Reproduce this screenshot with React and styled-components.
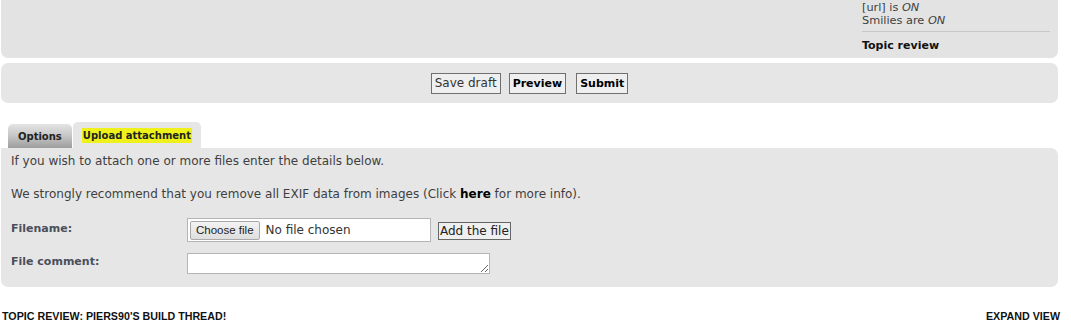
import React from "react";
import styled, { createGlobalStyle } from "styled-components";

const GlobalStyle = createGlobalStyle`
  html, body {
    margin: 0;
    padding: 0;
    background: #fff;
  }
  body {
    font-family: "DejaVu Sans", Verdana, sans-serif;
    font-size: 12px;
    color: #3f3f3f;
  }
`;

const Page = styled.div`
  width: 1057px;
  padding-left: 1px;
`;

const Panel = styled.div`
  background: ${({ $bg }) => $bg || "#e3e3e3"};
  border-radius: ${({ $radius }) => $radius || "7px"};
`;

const TopPanel = styled(Panel)`
  height: 58px;
  display: flex;
  justify-content: flex-end;
  padding-right: 8px;
  box-sizing: border-box;
`;

const SideInfo = styled.div`
  width: 188px;
  font-size: 11.3px;
  line-height: 13px;
  padding-top: 1px;

  em {
    font-style: italic;
  }
`;

const Rule = styled.hr`
  border: 0;
  border-top: 1px solid #c8c8c8;
  margin: 4px 0 7px;
`;

const SideTitle = styled.div`
  font-weight: bold;
  color: #111;
  font-size: 11px;
`;

const SubmitPanel = styled(Panel)`
  margin-top: 5px;
  height: 40px;
  display: flex;
  justify-content: center;
  align-items: center;
  gap: 8px;
  box-sizing: border-box;
`;

const Btn = styled.button`
  font-family: "DejaVu Sans", Verdana, sans-serif;
  font-size: ${({ $bold }) => ($bold ? "11px" : "12px")};
  font-weight: ${({ $bold }) => ($bold ? "bold" : "normal")};
  color: ${({ $bold }) => ($bold ? "#000" : "#333")};
  background: #efefef;
  border: 1px solid #707070;
  height: 21px;
  padding: 0 3px;
  line-height: 19px;
  margin: 0 ${({ $space }) => $space || 0}px 0 0;
`;

const Tabs = styled.div`
  display: flex;
  align-items: flex-end;
  margin: 19px 0 0 7px;
  height: 26px;
`;

const Tab = styled.div`
  height: ${({ $active }) => ($active ? "26px" : "24px")};
  box-sizing: border-box;
  padding: 0 ${({ $active }) => ($active ? "9px" : "10px")};
  margin-right: 1px;
  border-radius: 5px 5px 0 0;
  font-size: 10px;
  font-weight: bold;
  color: #222;
  display: flex;
  align-items: center;
  background: ${({ $active }) =>
    $active
      ? "#e6e6e6"
      : "linear-gradient(to bottom, #e4e4e4 0%, #c9c9c9 45%, #9d9d9d 100%)"};
`;

const Highlight = styled.span`
  background: #eef21a;
  padding: 2px 1px;
`;

const AttachPanel = styled(Panel)`
  background: #e6e6e6;
  border-radius: 0 7px 7px 7px;
  height: 139px;
  box-sizing: border-box;
  padding: 6px 10px 0;
`;

const Note = styled.p`
  margin: 0 0 ${({ $gap }) => $gap || 0}px;
  line-height: 15px;
`;

const Strong = styled.b`
  color: #000;
`;

const Row = styled.div`
  display: flex;
  align-items: flex-start;
  margin-top: ${({ $top }) => $top}px;
`;

const Label = styled.label`
  width: 176px;
  font-weight: bold;
  font-size: 11px;
  color: #4a4f5c;
  padding-top: ${({ $pt }) => $pt || 0}px;
`;

const FileBox = styled.div`
  width: 244px;
  height: 24px;
  box-sizing: border-box;
  background: #fff;
  border: 1px solid #b5b5b5;
  display: flex;
  align-items: center;
  padding-left: 2px;
  font-size: 12px;
  color: #333;
  gap: 6px;
`;

const ChooseBtn = styled.span`
  font-family: "Liberation Sans", Arial, sans-serif;
  font-size: 11.5px;
  color: #222;
  background: linear-gradient(#f3f3f3, #dedede);
  border: 1px solid #a9a9a9;
  border-radius: 2px;
  padding: 2px 5px;
  line-height: 13px;
`;

const AddBtn = styled.button`
  font-family: "DejaVu Sans", Verdana, sans-serif;
  font-size: 12px;
  color: #222;
  background: #efefef;
  border: 1px solid #666;
  height: 18px;
  padding: 0 1px;
  margin: 4px 0 0 7px;
  line-height: 16px;
`;

const Comment = styled.textarea`
  width: 303px;
  height: 21px;
  box-sizing: border-box;
  border: 1px solid #b5b5b5;
  margin: 0;
  resize: both;
`;

const Footer = styled.div`
  display: flex;
  justify-content: space-between;
  font-family: "Liberation Sans", Arial, sans-serif;
  font-size: 10.7px;
  font-weight: bold;
  color: #111;
  margin: 23px -2px 0 0;
  padding: 0 0 0 1px;
`;

export default function App() {
  return (
    <>
      <GlobalStyle />
      <Page>
        <TopPanel $radius="0 0 7px 7px">
          <SideInfo>
            <div>[url] is <em>ON</em></div>
            <div>Smilies are <em>ON</em></div>
            <Rule />
            <SideTitle>Topic review</SideTitle>
          </SideInfo>
        </TopPanel>

        <SubmitPanel $bg="#e6e6e6">
          <Btn>Save draft</Btn>
          <Btn $bold $space={2}>Preview</Btn>
          <Btn $bold>Submit</Btn>
        </SubmitPanel>

        <Tabs>
          <Tab>Options</Tab>
          <Tab $active>
            <Highlight>Upload attachment</Highlight>
          </Tab>
        </Tabs>

        <AttachPanel>
          <Note $gap={18}>If you wish to attach one or more files enter the details below.</Note>
          <Note>
            We strongly recommend that you remove all EXIF data from images (Click{" "}
            <Strong>here</Strong> for more info).
          </Note>
          <Row $top={16}>
            <Label $pt={4}>Filename:</Label>
            <FileBox>
              <ChooseBtn>Choose file</ChooseBtn>
              No file chosen
            </FileBox>
            <AddBtn>Add the file</AddBtn>
          </Row>
          <Row $top={11}>
            <Label $pt={2}>File comment:</Label>
            <Comment />
          </Row>
        </AttachPanel>

        <Footer>
          <span>TOPIC REVIEW: PIERS90'S BUILD THREAD!</span>
          <span>EXPAND VIEW</span>
        </Footer>
      </Page>
    </>
  );
}
